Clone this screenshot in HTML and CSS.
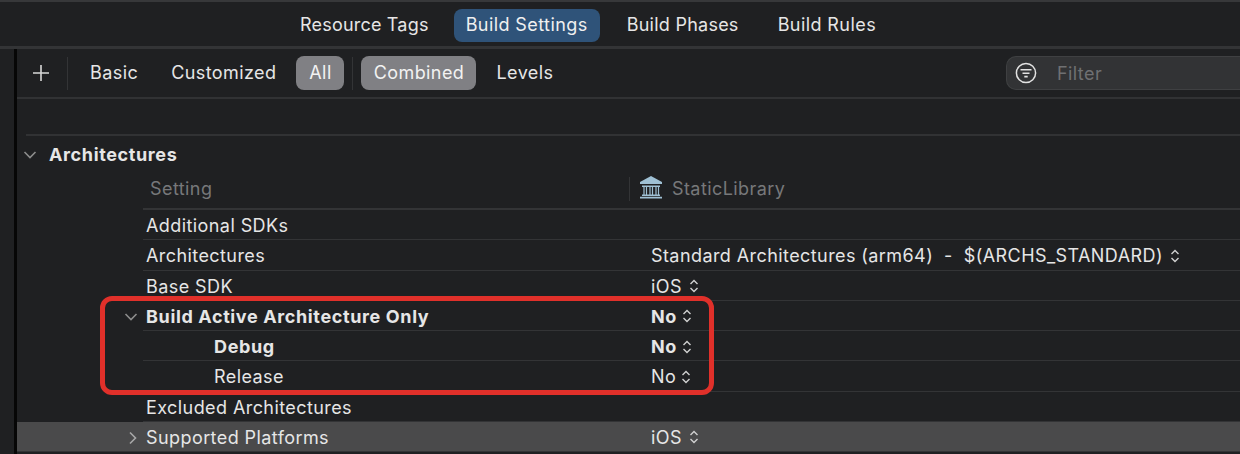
FILE: index.html
```html
<!DOCTYPE html>
<html lang="en">
<head>
    <meta charset="UTF-8">
    <title>Build Settings</title>
    <link rel="stylesheet" href="styles.css">
</head>
<body>
    <div class="tabs">
        <span class="tab tab-resource">Resource Tags</span>
        <span class="tab tab-active">Build Settings</span>
        <span class="tab tab-phases">Build Phases</span>
        <span class="tab tab-rules">Build Rules</span>
    </div>
    <div class="main">
        <div class="gutter"></div>
        <div class="content">
            <div class="toolbar">
                <svg class="plus" width="18" height="18" viewBox="0 0 18 18"><path d="M9 1v16M1 9h16" stroke="#d8d8d8" stroke-width="1.6" fill="none"/></svg>
                <span class="divider divider-plus"></span>
                <span class="tool tool-basic">Basic</span>
                <span class="tool tool-custom">Customized</span>
                <span class="tool pill pill-all">All</span>
                <span class="divider divider-all"></span>
                <span class="tool pill pill-combined">Combined</span>
                <span class="tool tool-levels">Levels</span>
                <div class="filter">
                    <svg width="22" height="22" viewBox="0 0 22 22"><circle cx="11" cy="11" r="9.6" stroke="#e2e2e2" stroke-width="1.5" fill="none"/><path d="M5.500 7.800h11M7.500 11.200h7M9.300 14.600h3.400" stroke="#e2e2e2" stroke-width="1.600" fill="none"/></svg>
                    <span class="filter-text">Filter</span>
                </div>
            </div>
            <div class="spacer"></div>
            <div class="section">
                <svg class="chevron" width="14" height="10" viewBox="0 0 14 10"><path d="M1.500 2l5.500 5.500L12.500 2" stroke="#8c8c8c" stroke-width="1.600" fill="none"/></svg>
                <span>Architectures</span>
            </div>
            <div class="table">
                <div class="row row-head">
                    <span class="name head-name">Setting</span>
                    <span class="value head-value">
                        <span class="head-sep"></span>
                        <svg class="lib-icon" width="24" height="24" viewBox="0 0 24 24"><path d="M12 1L23 7V9H1V7z" fill="#9fc0d4"/><path d="M3 10.500h18v1.500H3zM3 19.500h18v1.500H3zM1 21.800h22v1.700H1z" fill="#9fc0d4"/><path d="M5 12v8M7.500 12v8M11 12v8M13.500 12v8M17 12v8M19.500 12v8" stroke="#9fc0d4" stroke-width="1.200"/></svg>
                        <span>StaticLibrary</span>
                    </span>
                </div>
                <div class="row"><span class="name">Additional SDKs</span><span class="value"></span></div>
                <div class="row"><span class="name">Architectures</span><span class="value">Standard Architectures (arm64)&nbsp; -&nbsp; $(ARCHS_STANDARD)<svg class="updown" width="10" height="14" viewBox="0 0 10 14"><path d="M1.500 5L5 1.500 8.500 5M1.500 9L5 12.500 8.500 9" stroke="#d0d0d0" stroke-width="1.400" fill="none"/></svg></span></div>
                <div class="row"><span class="name">Base SDK</span><span class="value">iOS<svg class="updown" width="10" height="14" viewBox="0 0 10 14"><path d="M1.500 5L5 1.500 8.500 5M1.500 9L5 12.500 8.500 9" stroke="#d0d0d0" stroke-width="1.400" fill="none"/></svg></span></div>
                <div class="row">
                    <svg class="chevron-row" width="14" height="10" viewBox="0 0 14 10"><path d="M1.500 2l5.500 5.500L12.500 2" stroke="#8c8c8c" stroke-width="1.600" fill="none"/></svg>
                    <span class="name bold">Build Active Architecture Only</span>
                    <span class="value bold">No<svg class="updown" width="10" height="14" viewBox="0 0 10 14"><path d="M1.500 5L5 1.500 8.500 5M1.500 9L5 12.500 8.500 9" stroke="#d0d0d0" stroke-width="1.400" fill="none"/></svg></span>
                </div>
                <div class="row"><span class="name sub bold">Debug</span><span class="value bold">No<svg class="updown" width="10" height="14" viewBox="0 0 10 14"><path d="M1.500 5L5 1.500 8.500 5M1.500 9L5 12.500 8.500 9" stroke="#d0d0d0" stroke-width="1.400" fill="none"/></svg></span></div>
                <div class="row"><span class="name sub">Release</span><span class="value value-no">No<svg class="updown" width="10" height="14" viewBox="0 0 10 14"><path d="M1.500 5L5 1.500 8.500 5M1.500 9L5 12.500 8.500 9" stroke="#d0d0d0" stroke-width="1.400" fill="none"/></svg></span></div>
                <div class="row"><span class="name">Excluded Architectures</span><span class="value"></span></div>
                <div class="row row-selected">
                    <svg class="chevron-side" width="10" height="14" viewBox="0 0 10 14"><path d="M2 1.500L7.500 7 2 12.500" stroke="#a8a8a8" stroke-width="1.600" fill="none"/></svg>
                    <span class="name">Supported Platforms</span>
                    <span class="value">iOS<svg class="updown" width="10" height="14" viewBox="0 0 10 14"><path d="M1.500 5L5 1.500 8.500 5M1.500 9L5 12.500 8.500 9" stroke="#d0d0d0" stroke-width="1.400" fill="none"/></svg></span>
                </div>
            </div>
        </div>
    </div>
    <div class="highlight"></div>
</body>
</html>
```

FILE: styles.css
```css
* {
    box-sizing: border-box;
}
html, body {
    margin: 0;
    height: 454px;
    overflow: hidden;
}
body {
    position: relative;
    width: 1240px;
    font-family: Inter, 'Liberation Sans', sans-serif;
    font-size: 18px;
    letter-spacing: 0.42px;
    background-color: #1f2022;
    color: #e6e6e6;
}

/* top tab bar */
.tabs {
    display: flex;
    align-items: center;
    height: 49px;
    padding-left: 288px;
    padding-top: 3px;
    border-top: 2px solid #37383a;
    border-bottom: 3px solid #333436;
}
.tab {
    padding: 0 12px;
    height: 33px;
    line-height: 31px;
    border-radius: 8px;
}
.tab-resource {
    letter-spacing: 0.2px;
}
.tab-active {
    margin-left: 13px;
    background-color: #2f5379;
    color: #f0f0f0;
}
.tab-phases {
    margin-left: 15px;
    letter-spacing: 0.25px;
}
.tab-rules {
    margin-left: 15px;
}

.main {
    display: flex;
    height: 405px;
}
.gutter {
    width: 17px;
    flex: none;
    border-right: 3px solid #060606;
}
.content {
    flex: 1;
    min-width: 0;
}

/* filter bar */
.toolbar {
    display: flex;
    align-items: center;
    height: 50px;
    padding-left: 15px;
    border-bottom: 2px solid #313234;
}
.toolbar > * {
    flex: none;
}
.divider {
    width: 1px;
    height: 33px;
    background-color: #333436;
}
.divider-plus {
    margin-left: 17px;
}
.tool {
    height: 34px;
    line-height: 34px;
}
.tool-basic {
    margin-left: 22px;
}
.tool-custom {
    margin-left: 33px;
}
.pill {
    background-color: #808084;
    border-radius: 8px;
    color: #f2f2f2;
    text-align: center;
}
.pill-all {
    width: 48px;
    margin-left: 20px;
}
.divider-all {
    margin-left: 8px;
}
.pill-combined {
    width: 115px;
    margin-left: 8px;
}
.tool-levels {
    margin-left: 20px;
}
.filter {
    display: flex;
    align-items: center;
    width: 234px;
    height: 34px;
    margin-left: auto;
    padding-left: 8px;
    background-color: #323335;
    border: 1px solid #3f4042;
    border-right: none;
    border-radius: 10px 0 0 10px;
}
.filter-text {
    margin-left: 20px;
    color: #6f7072;
}

.spacer {
    height: 37px;
    margin-left: 9px;
    border-bottom: 2px solid #313234;
}

/* settings table */
.section {
    display: flex;
    align-items: center;
    height: 36px;
    padding-left: 6px;
    padding-top: 1px;
    font-weight: 700;
    letter-spacing: 0.63px;
}
.section span {
    margin-left: 12px;
}
.table {
    position: relative;
}
.row {
    position: relative;
    display: flex;
    align-items: center;
    height: 30.25px;
    margin-left: 126px;
    padding-top: 2px;
    border-bottom: 1px solid #333436;
}
.row-head {
    height: 38px;
    padding-top: 0;
    padding-bottom: 3px;
    border-bottom: 2px solid #333436;
    color: #77787a;
}
.name {
    width: 505px;
    padding-left: 3px;
    flex: none;
}
.head-name {
    padding-left: 7px;
}
.sub {
    padding-left: 71px;
}
.bold {
    font-weight: 700;
    letter-spacing: 0.63px;
}
.value {
    display: flex;
    align-items: center;
    margin-left: 3px;
    white-space: nowrap;
}
.head-value {
    margin-left: -19px;
}
.head-sep {
    width: 1px;
    height: 24px;
    margin-right: 9px;
    background-color: #333436;
}
.lib-icon {
    margin-right: 9px;
    margin-top: -3px;
}
.updown {
    margin-left: 7px;
}
.bold .updown,
.value-no .updown {
    margin-left: 5px;
}
.chevron-row {
    position: absolute;
    left: -19px;
    top: 11px;
}
.chevron-side {
    position: absolute;
    top: 9px;
}
.row-selected {
    margin-left: 0;
    padding-left: 126px;
    background-color: #4a4a4b;
}
.row-selected .chevron-side {
    left: 111px;
}

/* red annotation drawn over the table */
.highlight {
    position: absolute;
    left: 100px;
    top: 296px;
    width: 614px;
    height: 99px;
    border: 5px solid #e0302a;
    border-radius: 12px;
}
```
